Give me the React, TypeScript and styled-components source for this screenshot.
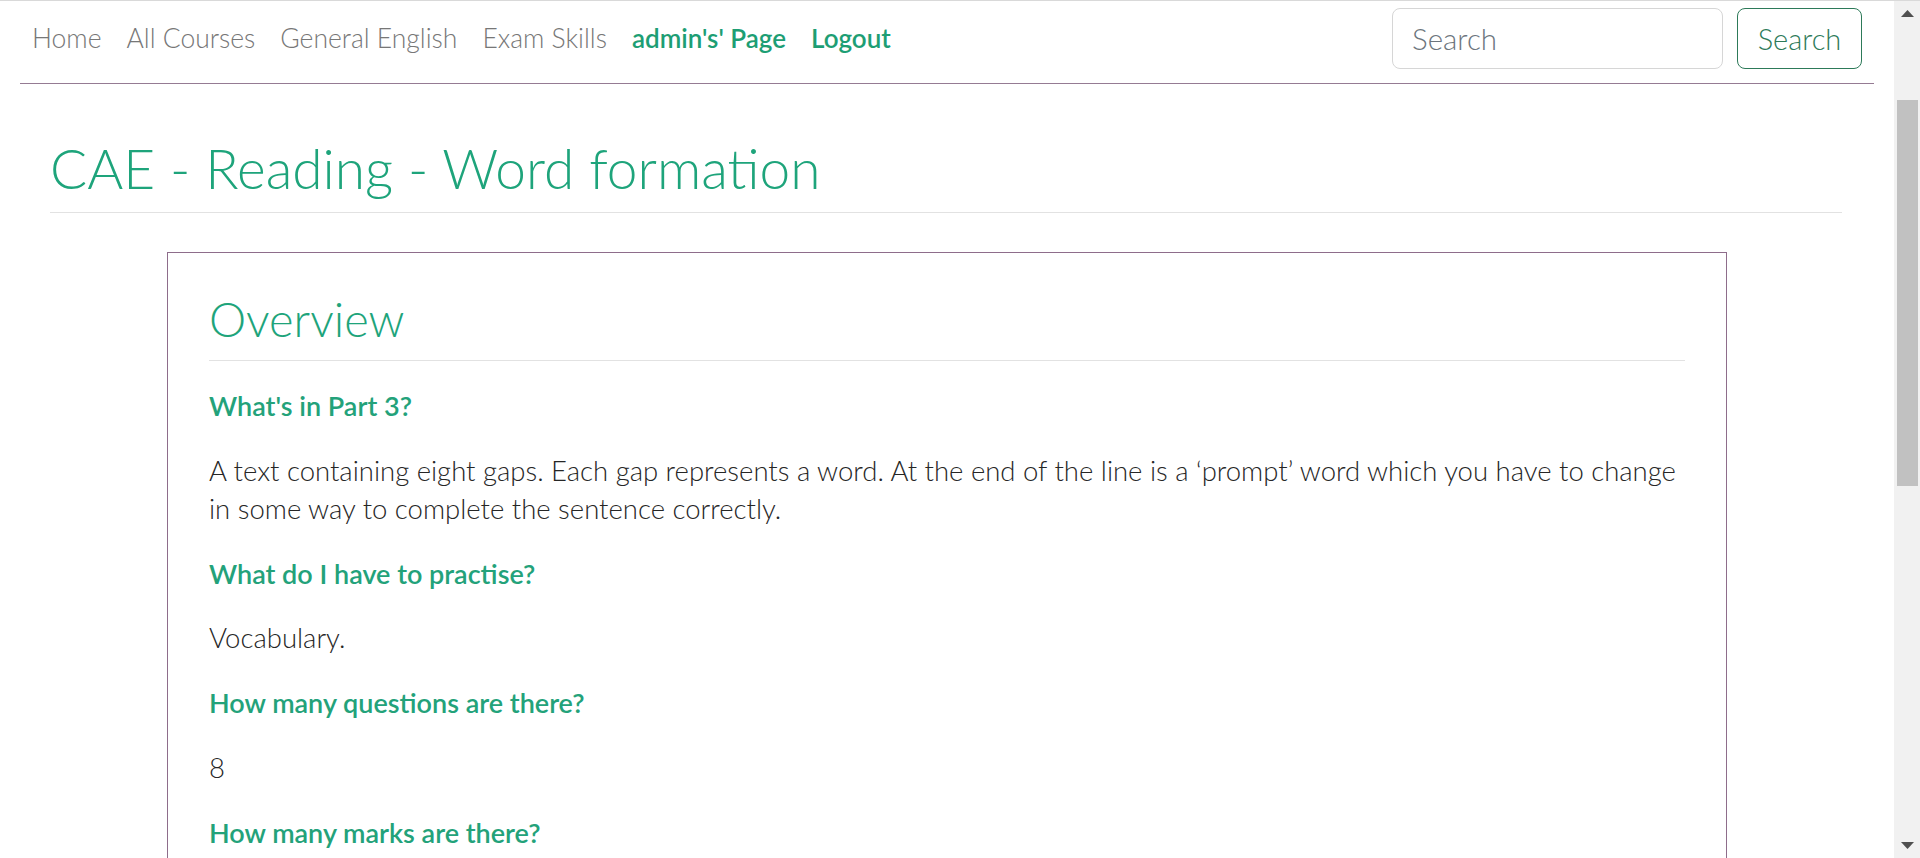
import styled, { createGlobalStyle } from "styled-components";

// page-wide reset, the screenshot is the browser at 150% zoom
const Global = createGlobalStyle`
  html, body {
    margin: 0;
    padding: 0;
    background: #ffffff;
  }
  body {
    font-family: "Lato", "Open Sans", sans-serif;
    color: #222;
  }
`;

const green = "#1ea47b";

const navLinks = [
    { label: "Home", active: false },
    { label: "All Courses", active: false },
    { label: "General English", active: false },
    { label: "Exam Skills", active: false },
    { label: "admin's' Page", active: true },
    { label: "Logout", active: true },
];

const overview = [
    {
        q: "What's in Part 3?",
        a: "A text containing eight gaps. Each gap represents a word. At the end of the line is a \u2018prompt\u2019 word which you have to change in some way to complete the sentence correctly.",
    },
    { q: "What do I have to practise?", a: "Vocabulary." },
    { q: "How many questions are there?", a: "8" },
    { q: "How many marks are there?", a: "" },
];

export default function App() {
    return (
        <Screen>
            <Global />
            <Viewport>
                <NavBar>
                    <NavList>
                        {navLinks.map((l) => (
                            <NavLink key={l.label} $active={l.active}>
                                {l.label}
                            </NavLink>
                        ))}
                    </NavList>
                    <SearchForm>
                        <SearchInput placeholder="Search" />
                        <SearchButton>Search</SearchButton>
                    </SearchForm>
                </NavBar>

                <Header>
                    <Title>CAE - Reading - Word formation</Title>
                </Header>

                <Card>
                    <CardTitle>Overview</CardTitle>
                    {overview.map((item) => (
                        <div key={item.q}>
                            <Question>{item.q}</Question>
                            {item.a && <Answer>{item.a}</Answer>}
                        </div>
                    ))}
                </Card>
            </Viewport>

            {/* browser scrollbar */}
            <ScrollBar>
                <ScrollArrow>
                    <svg width="13" height="7" viewBox="0 0 13 7">
                        <path d="M6.5 0L13 7H0z" fill="#505050" />
                    </svg>
                </ScrollArrow>
                <Track>
                    <Thumb />
                </Track>
                <ScrollArrow>
                    <svg width="13" height="7" viewBox="0 0 13 7">
                        <path d="M0 0h13L6.5 7z" fill="#505050" />
                    </svg>
                </ScrollArrow>
            </ScrollBar>
        </Screen>
    );
}

const Screen = styled.div`
  display: flex;
  height: 100vh;
  overflow: hidden;
  border-top: 1px solid #d9d9d9;
  box-sizing: border-box;
`;

const Viewport = styled.main`
  flex: 1;
  min-width: 0;
  overflow: hidden;
`;

const NavBar = styled.nav`
  display: flex;
  align-items: center;
  justify-content: space-between;
  margin: 0 20px;
  padding: 7px 12px 14px 0;
  border-bottom: 1px solid #957b93;
`;

const NavList = styled.div`
  display: flex;
  align-items: center;
  margin-bottom: 2px;
`;

const NavLink = styled.a<{ $active: boolean }>`
  padding: 0 12.5px;
  font-size: ${(p) => (p.$active ? "26px" : "26.5px")};
  line-height: 36px;
  color: ${(p) => (p.$active ? "#1d9e74" : "#777777")};
  font-weight: ${(p) => (p.$active ? 600 : 300)};
  cursor: pointer;
  &:first-child {
    padding-left: 12px;
  }
`;

const SearchForm = styled.form`
  display: flex;
  gap: 14px;
`;

const SearchInput = styled.input`
  width: 331px;
  height: 61px;
  box-sizing: border-box;
  padding: 0 19px;
  border: 1px solid #d6d6d6;
  border-radius: 8px;
  font-family: "Lato", sans-serif;
  font-size: 29.5px;
  font-weight: 300;
  color: #333;
  &::placeholder {
    color: #6c757d;
  }
`;

const SearchButton = styled.button`
  width: 125px;
  height: 61px;
  box-sizing: border-box;
  background: #fff;
  border: 1px solid #2d7a59;
  border-radius: 8px;
  font-family: "Lato", sans-serif;
  font-size: 29px;
  font-weight: 300;
  color: #2d7a59;
`;

const Header = styled.header`
  margin: 48px 52px 39px 50px;
  border-bottom: 1px solid #e2e2e2;
  padding-bottom: 8px;
`;

const Title = styled.h1`
  margin: 0;
  font-size: 55px;
  font-weight: 300;
  line-height: 72px;
  color: ${green};
`;

const Card = styled.section`
  width: 1560px;
  box-sizing: border-box;
  margin: 0 auto;
  padding: 36px 41px;
  border: 1px solid #8e6d8b;
`;

const CardTitle = styled.h2`
  margin: 0 0 27px;
  padding-bottom: 11px;
  border-bottom: 1px solid #e2e2e2;
  font-size: 47px;
  font-weight: 300;
  line-height: 60px;
  color: ${green};
`;

const Question = styled.h5`
  margin: 0 0 27.5px;
  font-size: 27px;
  font-weight: 600;
  line-height: 36px;
  color: #23a27a;
`;

const Answer = styled.p`
  margin: 0 0 28px;
  font-size: 27.5px;
  font-weight: 300;
  line-height: 38px;
  color: #262626;
`;

const ScrollBar = styled.aside`
  width: 26px;
  flex-shrink: 0;
  display: flex;
  flex-direction: column;
  background: #f1f1f1;
`;

const ScrollArrow = styled.div`
  height: 25px;
  display: flex;
  align-items: center;
  justify-content: center;
`;

const Track = styled.div`
  flex: 1;
  padding: 74px 2px 0 3px;
`;

const Thumb = styled.div`
  height: 386px;
  background: #c1c1c1;
`;
